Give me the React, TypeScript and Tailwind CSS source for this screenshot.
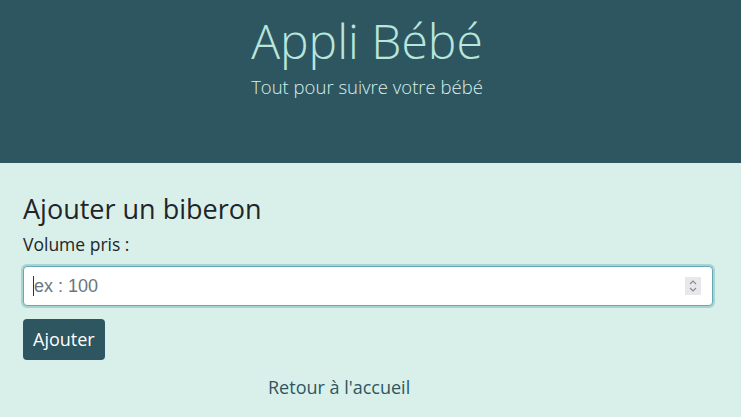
import React from "react";

export default function App() {
  return (
    <div className="min-h-[417px] w-full bg-[#d9f0ea]" style={{ fontFamily: '"Open Sans", "Noto Sans", sans-serif' }}>
      <header className="flex h-[163px] flex-col items-center bg-[#2e5660] pt-[9px]">
        <h1 className="mr-[7px] text-[48px] font-light leading-[64px] text-[#b9e6dc]">Appli Bébé</h1>
        <p className="mr-[7px] mt-[2px] text-[18.5px] font-normal leading-[24px] text-[#d9f0ea]" style={{ fontWeight: 350 }}>Tout pour suivre votre bébé</p>
      </header>
      <main className="px-[23px] pt-[28px]">
        <h2 className="text-[27px] font-normal leading-[36px] text-[#212529]">Ajouter un biberon</h2>
        <label className="mt-[5px] block text-[17.5px] leading-[24px] text-[#212529]">Volume pris :</label>
        <div className="mt-[10px] flex h-[40px] w-[690px] items-center rounded-[4px] border border-[#66a9b6] bg-white pl-[9px] pr-[11px] shadow-[0_0_0_2px_#a9d3d1]">
          <div className="h-[20px] w-px bg-[#333]" />
          <span className="flex-1 text-[18px] text-[#6c757d]" style={{ fontFamily: '"Liberation Sans", Arial, sans-serif' }}>ex : 100</span>
          <div className="flex h-[18px] w-[16px] flex-col items-center justify-center bg-[#e8e8ec]">
            <svg width="10" height="14" viewBox="0 0 10 14" fill="none" stroke="#8a8a90" strokeWidth="1.2">
              <path d="M2 5 L5 2 L8 5" />
              <path d="M2 9 L5 12 L8 9" />
            </svg>
          </div>
        </div>
        <button className="mt-[13px] flex h-[41px] items-center rounded-[4px] bg-[#2e5660] px-[10px] text-[18px] text-white">Ajouter</button>
        <div className="mt-[14px] pl-[245px]">
          <a className="text-[18px] text-[#2e5660]">Retour à l'accueil</a>
        </div>
      </main>
    </div>
  );
}
